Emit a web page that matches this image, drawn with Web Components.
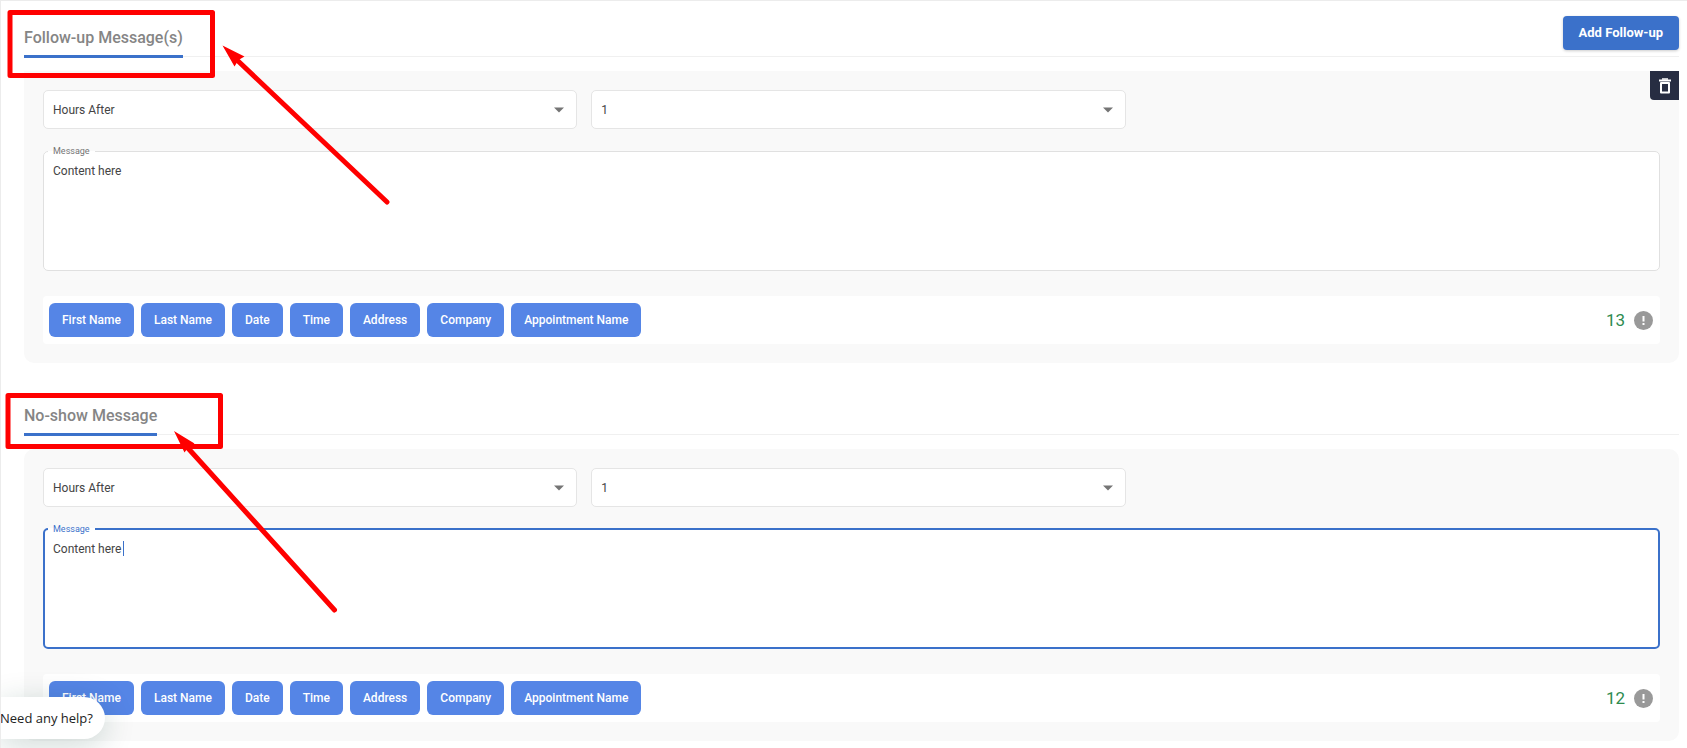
<!DOCTYPE html>
<html lang="en">

<head>
  <meta charset="UTF-8">
  <meta name="viewport" content="width=device-width, initial-scale=1.0">
  <title>Messages</title>
  <style>
    body {
      margin: 0;
      background: #fff;
      color: #444;
      font: 12px/16px Roboto, "Liberation Sans", sans-serif;
    }
  </style>
</head>

<body>

  <message-page>
    <message-section heading="Follow-up Message(s)">
      <add-button slot="action">Add Follow-up</add-button>
      <message-card text="Content here" count="13" removable></message-card>
    </message-section>
    <message-section heading="No-show Message">
      <message-card text="Content here" count="12" active></message-card>
    </message-section>
    <red-marks slot="over"></red-marks>
    <help-bubble slot="over">Need any help?</help-bubble>
  </message-page>

  <template id="page-template">
    <style>
      :host {
        display: block;
        position: relative;
        box-sizing: border-box;
        height: 100vh;
        overflow: hidden;
        border-top: 1px solid #ececec;
        border-left: 1px solid #ececec;
      }
      main { display: flex; flex-direction: column; gap: 16px; padding: 0 8px 0 23px; }
    </style>
    <main><slot></slot></main>
    <slot name="over"></slot>
  </template>

  <template id="section-template">
    <style>
      :host { display: block; }
      header {
        display: flex;
        justify-content: space-between;
        align-items: flex-end;
        height: 55px;
        margin-bottom: 14px;
        border-bottom: 1px solid #f0f0f0;
      }
      h2 {
        margin: 0 0 -2px;
        padding-bottom: 7px;
        border-bottom: 3px solid #3b71ca;
        color: #858585;
        font-size: 16px;
        line-height: 20px;
        font-weight: 500;
      }
    </style>
    <header>
      <h2></h2>
      <slot name="action"></slot>
    </header>
    <slot></slot>
  </template>

  <template id="add-template">
    <style>
      :host { display: block; padding-bottom: 6px; }
      button {
        display: block;
        height: 34px;
        padding: 0 16px;
        border: 0;
        border-radius: 4px;
        background: #3b71ca;
        box-shadow: 0 1px 3px #0003;
        color: #fff;
        font: 700 13px/16px Roboto, sans-serif;
      }
    </style>
    <button type="button"><slot></slot></button>
  </template>

  <template id="card-template">
    <style>
      :host {
        display: flex;
        flex-direction: column;
        position: relative;
        padding: 19px;
        border-radius: 10px;
        background: #f9f9f9;
      }
      :host([removable]) { border-radius: 0 0 10px 10px; }
      .selects {
        display: grid;
        grid-template-columns: repeat(3, 1fr);
        gap: 14px;
        margin-right: -14px;
        margin-bottom: 16px;
      }
      .remove {
        display: none;
        position: absolute;
        top: 0;
        right: 0;
        width: 29px;
        height: 29px;
        padding: 0;
        border: 0;
        border-radius: 0 0 0 4px;
        background: #272d42;
      }
      :host([removable]) .remove { display: grid; place-items: center; }
      .tags {
        display: flex;
        align-items: center;
        gap: 7px;
        margin-top: 25px;
        padding: 7px 7px 7px 6px;
        border-radius: 4px;
        background: #fff;
      }
      output { margin-left: auto; color: #2e8b4f; font-size: 17px; line-height: 20px; }
      .info { margin-left: 2px; }
    </style>
    <button class="remove" type="button" aria-label="Delete">
      <svg width="18" height="18" viewBox="0 0 18 18" fill="none" stroke="#fff">
        <path d="M3 3.500h12" stroke-width="2"/>
        <path d="M6 2h6" stroke-width="1.500"/>
        <path d="M5 6h8v9.500H5z" stroke-width="2" stroke-linejoin="round"/>
      </svg>
    </button>
    <div class="selects">
      <drop-down label="Unit" value="Hours After"></drop-down>
      <drop-down label="Amount" value="1"></drop-down>
    </div>
    <message-field></message-field>
    <div class="tags">
      <tag-button>First Name</tag-button>
      <tag-button>Last Name</tag-button>
      <tag-button>Date</tag-button>
      <tag-button>Time</tag-button>
      <tag-button>Address</tag-button>
      <tag-button>Company</tag-button>
      <tag-button>Appointment Name</tag-button>
      <output></output>
      <svg class="info" width="19" height="19" viewBox="0 0 19 19">
        <circle cx="9.500" cy="9.500" r="9.500" fill="#999"/>
        <path d="M8.500 5h2v5.500h-2zM8.500 12h2v2h-2z" fill="#fff"/>
      </svg>
    </div>
  </template>

  <template id="drop-template">
    <style>
      :host { display: grid; align-items: center; }
      select, svg { grid-area: 1 / 1; }
      select {
        appearance: none;
        width: 100%;
        height: 39px;
        padding: 0 30px 0 9px;
        border: 1px solid #e5e5e5;
        border-radius: 5px;
        background: #fff;
        color: #444;
        font: 12px/16px Roboto, sans-serif;
      }
      svg { justify-self: end; margin-right: 13px; pointer-events: none; }
    </style>
    <select><option></option></select>
    <svg width="10" height="6" viewBox="0 0 10 6"><path d="M0 .5h10l-5 5z" fill="#757575"/></svg>
  </template>

  <template id="field-template">
    <style>
      :host { display: block; position: relative; }
      fieldset {
        box-sizing: border-box;
        height: 126px;
        margin: 0;
        padding: 0 4px;
        border: 1px solid #e0e0e0;
        border-radius: 5px;
        background: #fff;
      }
      legend { padding: 0 5px; color: #757575; font-size: 9px; line-height: 12px; }
      textarea {
        display: block;
        box-sizing: border-box;
        width: 100%;
        height: 108px;
        padding: 6px 5px;
        border: 0;
        outline: 0;
        resize: none;
        background: none;
        color: #444;
        font: 12px/16px Roboto, sans-serif;
      }
      .caret { display: none; }
      :host([active]) fieldset { padding: 0 3px; border: 2px solid #3b71ca; }
      :host([active]) legend { color: #3b71ca; }
      :host([active]) .caret {
        display: block;
        position: absolute;
        left: 80px;
        top: 18px;
        width: 1px;
        height: 15px;
        background: #3b71ca;
      }
    </style>
    <fieldset>
      <legend><label for="message">Message</label></legend>
      <textarea id="message" spellcheck="false"></textarea>
    </fieldset>
    <span class="caret"></span>
  </template>

  <template id="tag-template">
    <style>
      :host { display: block; }
      button {
        display: block;
        height: 34px;
        padding: 0 13px;
        border: 0;
        border-radius: 6px;
        background: #5585e6;
        color: #fff;
        font: 500 12px/16px Roboto, sans-serif;
      }
    </style>
    <button type="button"><slot></slot></button>
  </template>

  <template id="help-template">
    <style>
      :host { position: absolute; left: -1px; bottom: 9px; }
      button {
        display: block;
        height: 42px;
        padding: 0 12px 0 0;
        border: 0;
        border-radius: 0 21px 21px 0;
        background: #fff;
        box-shadow: 0 6px 32px #0a403433;
        color: #222;
        font: 13px/18px "Open Sans", "Noto Sans", sans-serif;
      }
    </style>
    <button type="button"><slot></slot></button>
  </template>

  <!-- red boxes and arrows over the headings -->
  <template id="marks-template">
    <style>
      :host { position: absolute; left: -1px; top: -1px; pointer-events: none; }
      svg { display: block; }
    </style>
    <svg width="400" height="640" viewBox="0 0 400 640" fill="none" stroke="#f00">
      <rect x="10" y="12.500" width="202.500" height="63" stroke-width="5" stroke-linejoin="round"/>
      <rect x="8" y="395.500" width="212.500" height="51" stroke-width="5" stroke-linejoin="round"/>
      <path d="M237 60L387 202M187 447L334.500 610" stroke-width="5" stroke-linecap="round"/>
      <path d="M222.500 45.500l22 11-6 3.500-4 6.500zM174 431l20.500 12.500-6 3.500-4 5.500z" fill="#f00" stroke="none"/>
    </svg>
  </template>

  <script>
    // base class: opens the shadow root and puts the template in it
    class TemplateElement extends HTMLElement {
      connectedCallback() {
        const template = document.getElementById(this.constructor.template);
        this.attachShadow({ mode: 'open' }).append(template.content.cloneNode(true));
        this.fill(this.shadowRoot);
      }
      fill() {}
    }

    customElements.define('message-page', class extends TemplateElement {
      static template = 'page-template';
    });

    customElements.define('message-section', class extends TemplateElement {
      static template = 'section-template';
      fill(root) {
        root.querySelector('h2').textContent = this.getAttribute('heading');
      }
    });

    customElements.define('add-button', class extends TemplateElement {
      static template = 'add-template';
    });

    customElements.define('tag-button', class extends TemplateElement {
      static template = 'tag-template';
    });

    customElements.define('drop-down', class extends TemplateElement {
      static template = 'drop-template';
      fill(root) {
        root.querySelector('select').setAttribute('aria-label', this.getAttribute('label'));
        root.querySelector('option').textContent = this.getAttribute('value');
      }
    });

    customElements.define('message-field', class extends TemplateElement {
      static template = 'field-template';
      fill(root) {
        root.querySelector('textarea').value = this.getAttribute('text');
      }
    });

    customElements.define('message-card', class extends TemplateElement {
      static template = 'card-template';
      fill(root) {
        const field = root.querySelector('message-field');
        field.setAttribute('text', this.getAttribute('text'));
        field.toggleAttribute('active', this.hasAttribute('active'));
        // the field may be upgraded already, so set its text here too
        const area = field.shadowRoot && field.shadowRoot.querySelector('textarea');
        if (area) area.value = this.getAttribute('text');
        root.querySelector('output').textContent = this.getAttribute('count');
      }
    });

    customElements.define('help-bubble', class extends TemplateElement {
      static template = 'help-template';
    });

    customElements.define('red-marks', class extends TemplateElement {
      static template = 'marks-template';
    });
  </script>

</body>

</html>
